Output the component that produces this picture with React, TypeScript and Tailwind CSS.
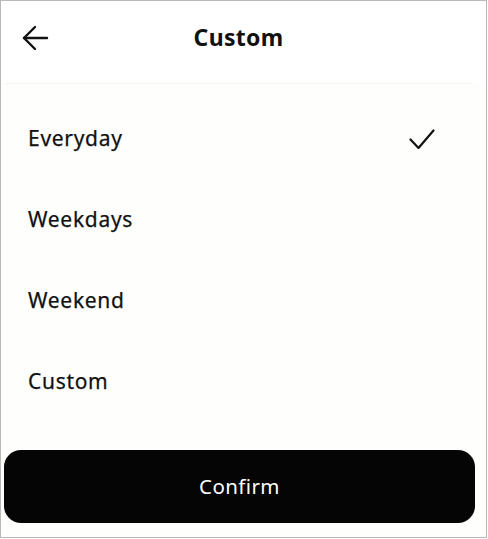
import React, { useState } from 'react';

const options = ['Everyday', 'Weekdays', 'Weekend', 'Custom'];

export default function App() {
  const [selected, setSelected] = useState('Everyday');

  return (
    <div
      className="w-[487px] h-[538px] border border-[#b9b9b9] bg-[#fefefd] flex flex-col text-[#111111]"
      style={{ fontFamily: '"Noto Sans", "Open Sans", sans-serif' }}
    >
      {/* Header */}
      <div className="h-[82px] shrink-0 flex items-center relative bg-white">
        <button className="absolute left-[21px] top-[24px] w-[27px] h-[26px] flex items-center justify-center">
          <svg width="27" height="26" viewBox="0 0 27 26" fill="none" stroke="#111" strokeWidth="2.4" strokeLinecap="round" strokeLinejoin="round">
            <path d="M2 13h23" />
            <path d="M13 2L2 13l11 11" />
          </svg>
        </button>
        <h1 className="w-full text-center text-[23px] font-bold leading-none pb-[10px] pr-[10px] tracking-[0.3px]">Custom</h1>
      </div>
      <div className="h-px ml-[4px] mr-[14px] bg-[#f3f3f1]" />

      {/* Options */}
      <div className="flex flex-col pt-[14px] flex-1">
        {options.map((opt) => (
          <button
            key={opt}
            onClick={() => setSelected(opt)}
            className="h-[81px] flex items-center justify-between pl-[27px] pr-[51px] text-left"
          >
            <span className="text-[21px] tracking-[0.7px] leading-none [-webkit-text-stroke:0.25px_#111]">{opt}</span>
            {selected === opt && (
              <svg width="26" height="20" viewBox="0 0 26 20" fill="none" stroke="#111" strokeWidth="2.2" strokeLinecap="round" strokeLinejoin="round">
                <path d="M1.5 10.5l8 8.5L24.5 1.5" />
              </svg>
            )}
          </button>
        ))}
      </div>

      {/* Footer */}
      <div className="pl-[3px] pb-[14px]">
        <button className="w-[471px] h-[73px] rounded-[17px] bg-[#050505] text-white text-[20.5px] tracking-[0.4px] flex items-center justify-center">
          Confirm
        </button>
      </div>
    </div>
  );
}
